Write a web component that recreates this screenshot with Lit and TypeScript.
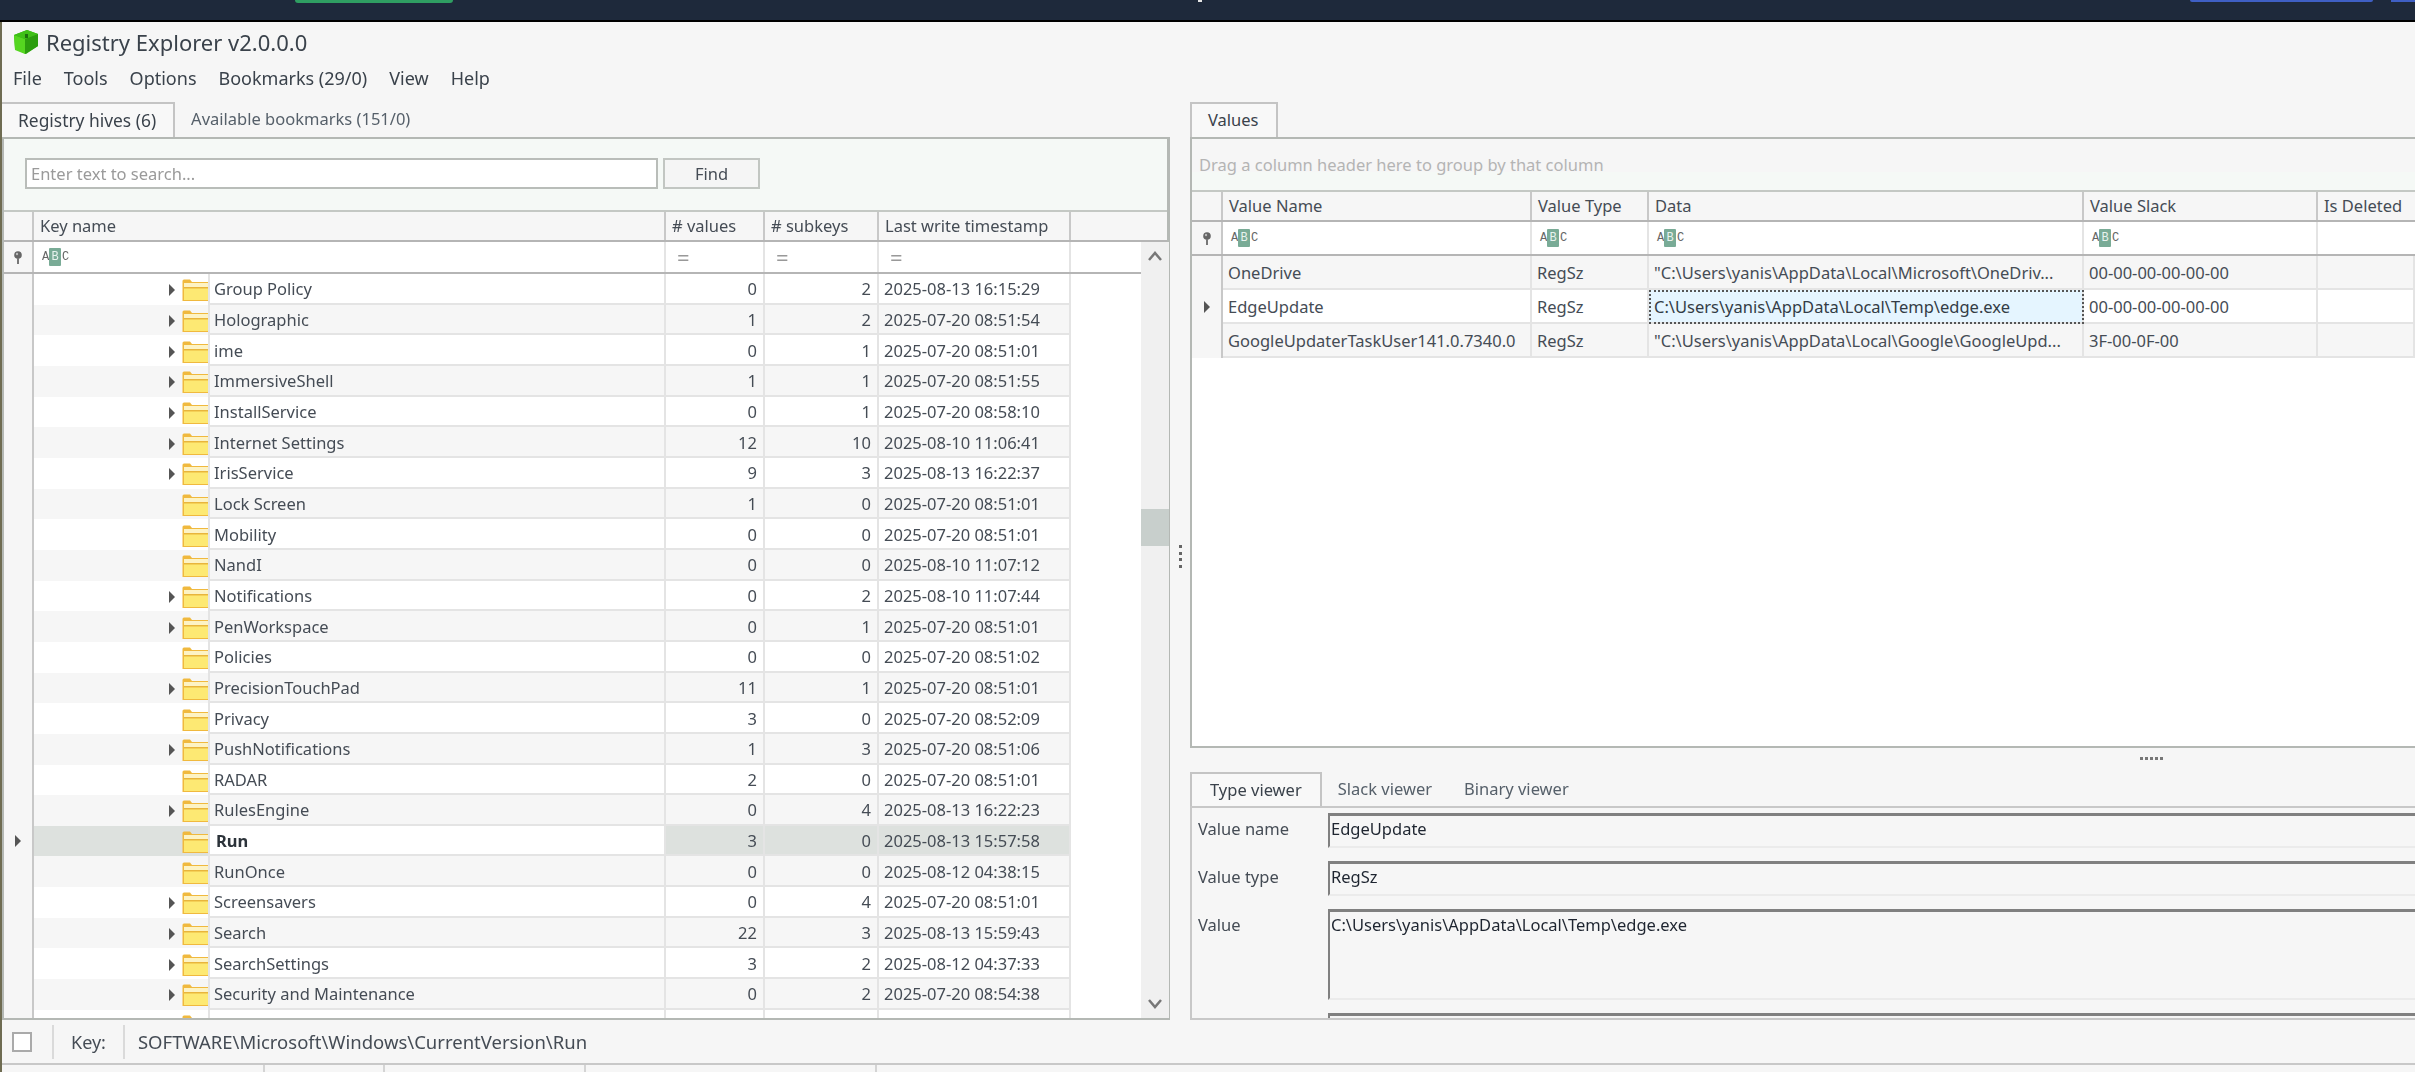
import { LitElement, html, css, svg } from 'lit';
import { customElement } from 'lit/decorators.js';

type Key = [string, number, number, string, boolean];

const keys: Key[] = [
  ['Group Policy', 0, 2, '2025-08-13 16:15:29', true],
  ['Holographic', 1, 2, '2025-07-20 08:51:54', true],
  ['ime', 0, 1, '2025-07-20 08:51:01', true],
  ['ImmersiveShell', 1, 1, '2025-07-20 08:51:55', true],
  ['InstallService', 0, 1, '2025-07-20 08:58:10', true],
  ['Internet Settings', 12, 10, '2025-08-10 11:06:41', true],
  ['IrisService', 9, 3, '2025-08-13 16:22:37', true],
  ['Lock Screen', 1, 0, '2025-07-20 08:51:01', false],
  ['Mobility', 0, 0, '2025-07-20 08:51:01', false],
  ['NandI', 0, 0, '2025-08-10 11:07:12', false],
  ['Notifications', 0, 2, '2025-08-10 11:07:44', true],
  ['PenWorkspace', 0, 1, '2025-07-20 08:51:01', true],
  ['Policies', 0, 0, '2025-07-20 08:51:02', false],
  ['PrecisionTouchPad', 11, 1, '2025-07-20 08:51:01', true],
  ['Privacy', 3, 0, '2025-07-20 08:52:09', false],
  ['PushNotifications', 1, 3, '2025-07-20 08:51:06', true],
  ['RADAR', 2, 0, '2025-07-20 08:51:01', false],
  ['RulesEngine', 0, 4, '2025-08-13 16:22:23', true],
  ['Run', 3, 0, '2025-08-13 15:57:58', false],
  ['RunOnce', 0, 0, '2025-08-12 04:38:15', false],
  ['Screensavers', 0, 4, '2025-07-20 08:51:01', true],
  ['Search', 22, 3, '2025-08-13 15:59:43', true],
  ['SearchSettings', 3, 2, '2025-08-12 04:37:33', true],
  ['Security and Maintenance', 0, 2, '2025-07-20 08:54:38', true],
];

const values = [
  ['OneDrive', 'RegSz', '"C:\\Users\\yanis\\AppData\\Local\\Microsoft\\OneDriv...', '00-00-00-00-00-00'],
  ['EdgeUpdate', 'RegSz', 'C:\\Users\\yanis\\AppData\\Local\\Temp\\edge.exe', '00-00-00-00-00-00'],
  ['GoogleUpdaterTaskUser141.0.7340.0', 'RegSz', '"C:\\Users\\yanis\\AppData\\Local\\Google\\GoogleUpd...', '3F-00-0F-00'],
];

const folder = svg`<svg class="folder" viewBox="0 0 26 22" width="26" height="22">
  <path d="M.5 22V2Q.5 .5 2 .5h6l2 2.500h16v19z" fill="#f0b93e"/>
  <path d="M2 4h24v4H2z" fill="#fdf3c4"/>
  <path d="M2 8h24v1.500H2z" fill="#e8b53c"/>
  <path d="M2 9.500h24v11.500H2z" fill="#fde973"/>
</svg>`;

const arrow = html`<svg class="arrow" viewBox="0 0 8 14" width="8" height="14"><path d="M1 1l6 6-6 6z" fill="#555"/></svg>`;

const pin = html`<svg viewBox="0 0 10 13" width="10" height="13"><circle cx="5" cy="4" r="3.800" fill="#666"/><circle cx="4" cy="3" r="1.200" fill="#bbb"/><path d="M4 7h2v6H4z" fill="#777"/></svg>`;

const abc = html`<span class="abc"><i>A</i><b>B</b><i>C</i></span>`;

@customElement('app-root')
export class AppRoot extends LitElement {
  static styles = css`
    :host {
      display: flex;
      flex-direction: column;
      width: 2415px;
      height: 1072px;
      overflow: hidden;
      font-family: "Noto Sans", "DejaVu Sans", sans-serif;
      font-size: 16.5px;
      color: #454c55;
      background: #f6f6f6;
    }
    .desk {
      flex: 0 0 20px;
      display: flex;
      align-items: flex-start;
      background: #1e293b;
      border-bottom: 2px solid #000;
    }
    .desk .green { margin-left: 295px; width: 158px; height: 3px; background: #2f9e62; border-radius: 0 0 3px 3px; }
    .desk .tick { margin-left: 745px; width: 4px; height: 2px; background: #e6e6e6; }
    .desk .blue { margin-left: 988px; width: 183px; height: 2px; background: #3f5fc4; border-radius: 0 0 3px 3px; }
    .desk .blue2 { margin-left: 18px; flex: 1; height: 2px; background: #3f5fc4; }
    .window {
      flex: 1;
      min-height: 0;
      display: flex;
      flex-direction: column;
      border-left: 2px solid #6f6c52;
      filter: blur(0.4px);
    }
    .title {
      flex: 0 0 40px;
      display: flex;
      align-items: center;
      gap: 7px;
      padding-left: 11px;
      font-size: 22px;
      color: #3a424b;
    }
    .menu {
      flex: 0 0 32px;
      display: flex;
      align-items: center;
      padding-left: 11px;
      font-size: 18px;
      color: #3a424b;
    }
    .menu span { margin-right: 22px; }
    .panes {
      flex: 0 0 918px;
      margin-top: 8px;
      display: grid;
      grid-template-columns: 1168px 20px 1fr;
      grid-template-rows: 918px;
    }
    .pane { display: flex; flex-direction: column; min-width: 0; min-height: 0; }
    .tabs { flex: 0 0 35px; display: flex; }
    .tab {
      display: flex;
      align-items: center;
      padding: 0 15px 2px 16px;
      box-sizing: border-box;
      color: #56606a;
    }
    .tab.on {
      background: #f8f8f8;
      color: #3a424b;
      border: solid #c4c4c4;
      border-width: 2px 2px 0 0;
      padding: 0 17px 2px 16px;
      font-size: 17.4px;
    }
    .tabs.right .tab.on { border-width: 2px 2px 0 2px; font-size: 16.5px; }
    .panel {
      flex: 1;
      box-sizing: border-box;
      min-height: 0;
      display: flex;
      flex-direction: column;
      border: 2px solid #b4b8b4;
      border-width: 2px 3px 2px 2px;
    }
    .search {
      flex: 0 0 71px;
      box-sizing: border-box;
      display: flex;
      align-items: center;
      gap: 5px;
      padding: 0 0 2px 21px;
      background: #f5f9f6;
    }
    .input {
      width: 633px;
      height: 31px;
      box-sizing: border-box;
      display: flex;
      align-items: center;
      padding-left: 4px;
      background: #fff;
      border: 2px solid #b9bdb9;
      color: #9a9a9a;
    }
    .button {
      width: 97px;
      height: 31px;
      box-sizing: border-box;
      display: flex;
      align-items: center;
      justify-content: center;
      background: #f5f5f5;
      border: 2px solid #c2c6c2;
    }
    .cols-left { display: grid; grid-template-columns: 30px 632px 99px 114px 192px 1fr; }
    .cols-right { display: grid; grid-template-columns: 31px 309px 117px 435px 234px 1fr; }
    .head {
      flex: 0 0 32px;
      background: #f6f6f6;
      border-top: 2px solid #c4c8c4;
      border-bottom: 2px solid #b5b5b5;
      box-sizing: border-box;
    }
    .head > div {
      display: flex;
      align-items: center;
      padding: 0 0 2px 6px;
      border-right: 2px solid #c8c8c8;
      box-sizing: border-box;
      white-space: nowrap;
    }
    .head > div:last-child { border-right: none; }
    .filter {
      background: #fff;
      border-bottom: 2px solid #b5b5b5;
      box-sizing: border-box;
    }
    .filter > div {
      display: flex;
      align-items: center;
      border-right: 2px solid #e4e4e4;
      box-sizing: border-box;
      padding-left: 8px;
      color: #8a8a8a;
    }
    .filter > div:first-child {
      background: #f6f6f6;
      justify-content: center;
      padding: 0;
      border-right: 2px solid #c8c8c8;
    }
    .filter > div:last-child { border-right: none; }
    .left-filter { flex: 0 0 32px; }
    .right-filter { flex: 0 0 34px; }
    .eq { padding-left: 11px !important; font-size: 22px; line-height: 1; color: #999 !important; }
    .abc { display: inline-flex; align-items: center; font-size: 12px; font-family: "Liberation Mono", monospace; color: #666; }
    .abc i { font-style: normal; width: 6px; text-align: center; }
    .abc b {
      font-weight: 400;
      color: #e8f2ee;
      background: #79ab96;
      width: 12px;
      height: 18px;
      line-height: 18px;
      text-align: center;
      border-radius: 1px;
      margin: 0 1px;
    }
    .lower { flex: 1; min-height: 0; display: flex; }
    .rows { flex: 0 0 1067px; min-width: 0; overflow: hidden; }
    .row { height: 30.67px; background: #fff; }
    .row.odd { background: #f6f6f6; }
    .row.sel { background: #dde1de; }
    .row .cell { padding-top: 1px; }
    .indicator {
      display: flex;
      align-items: center;
      justify-content: center;
      background: #f6f6f6;
      border-right: 2px solid #c8c8c8;
      box-sizing: border-box;
    }
    .tree { display: flex; align-items: center; justify-content: flex-end; padding-top: 2px; }
    .tree .arrow { margin-right: 6px; }
    .folder { flex: none; }
    .cell {
      display: flex;
      align-items: center;
      min-width: 0;
      padding: 0 5px;
      box-sizing: border-box;
      border-right: 2px solid #e4e4e4;
      border-bottom: 2px solid #e4e4e4;
      white-space: nowrap;
      overflow: hidden;
    }
    .name {
      border-left: 2px solid #e4e4e4;
      background: #fff;
      padding-left: 4px;
    }
    .row.odd .name { background: #f6f6f6; }
    .row.sel .name { background: #fff; font-weight: 700; color: #2c333a; padding-left: 6px; }
    .num { justify-content: flex-end; padding-right: 6px; }
    .keycol { display: grid; grid-template-columns: 174px 1fr; }
    .blank { background: #fff; flex: 0 0 70px; }
    .scroll {
      flex: 0 0 28px;
      display: flex;
      flex-direction: column;
      align-items: center;
      background: #f0f0f0;
      margin-top: -32px;
    }
    .scroll .up { flex: 0 0 28px; display: flex; align-items: center; }
    .scroll .space-a { flex: 0 0 239px; width: 100%; }
    .scroll .thumb { flex: 0 0 37px; width: 100%; background: #c8cfcc; }
    .scroll .space-b { flex: 1; width: 100%; }
    .scroll .down { flex: 0 0 28px; display: flex; align-items: center; }
    .splitter {
      display: flex;
      flex-direction: column;
      align-items: center;
      gap: 3.500px;
      padding-top: 443px;
    }
    .splitter i { width: 3px; height: 3px; background: #666; }
    .right-panel { border-right: none; }
    .group {
      flex: 0 0 51px;
      display: flex;
      align-items: center;
      padding: 0 0 1px 7px;
      box-sizing: border-box;
      color: #b4b4b4;
      background: linear-gradient(#f6f6f6 64%, #f5f9f6 64%);
    }
    .values-panel { flex: 0 0 611px; }
    .vrow { height: 34px; background: #fff; }
    .vrow.odd { background: #f6f6f6; }
    .focus {
      background: #e5f5ff;
      outline: 2px dotted #555;
      outline-offset: -2px;
      color: #333c45;
    }
    .white { flex: 1; background: #fff; }
    .hsplit {
      flex: 0 0 24px;
      box-sizing: border-box;
      display: flex;
      justify-content: flex-end;
      align-items: flex-start;
      gap: 2px;
      padding: 9px 252px 0 0;
    }
    .hsplit i { width: 3px; height: 3px; background: #777; }
    .subtabs { flex: 0 0 34px; display: flex; }
    .subtabs .tab.on { border-width: 2px 2px 0 2px; padding: 0 18px 2px; font-size: 16.5px; }
    .subtabs .tab { padding: 0 16px 2px; }
    .viewer {
      flex: 1;
      min-height: 0;
      overflow: hidden;
      display: grid;
      grid-template-columns: 130px 1fr;
      grid-template-rows: 35px 35px 91px 20px;
      row-gap: 13px;
      padding: 5px 0 0 6px;
      border-top: 2px solid #c8c8c8;
      border-left: 2px solid #c8c8c8;
      border-bottom: 2px solid #c8c8c8;
    }
    .viewer label { display: flex; align-items: center; height: 31px; }
    .field {
      padding: 1px 1px;
      border-top: 3px solid #808080;
      border-left: 2px solid #808080;
      border-bottom: 2px solid #ebebeb;
      box-sizing: border-box;
      color: #1e2530;
      line-height: 24px;
    }
    .status {
      flex: 0 0 43px;
      display: flex;
      align-items: center;
    }
    .check {
      width: 20px;
      height: 20px;
      box-sizing: border-box;
      margin-left: 10px;
      background: #fff;
      border: 2px solid #aaa;
    }
    .sep { width: 2px; height: 34px; background: #dadada; }
    .sep.first { margin-left: 20px; }
    .key-label { margin: 0 17px 0 17px; font-size: 18px; }
    .path { margin-left: 13px; font-size: 18.5px; }
    .bottom {
      flex: 1;
      display: grid;
      grid-template-columns: 263px 120px 201px 291px 1fr;
      border-top: 2px solid #c8c8c8;
    }
    .bottom div { border-right: 2px solid #d4d4d4; }
    .bottom div:last-child { border-right: none; }
  `;

  private renderKey(k: Key, i: number) {
    const sel = k[0] === 'Run';
    return html`<div class="row cols-left ${i % 2 ? 'odd' : ''} ${sel ? 'sel' : ''}">
      <div class="indicator">${sel ? arrow : ''}</div>
      <div class="keycol">
        <div class="tree">${k[4] ? arrow : ''}${folder}</div>
        <div class="cell name">${k[0]}</div>
      </div>
      <div class="cell num">${k[1]}</div>
      <div class="cell num">${k[2]}</div>
      <div class="cell">${k[3]}</div>
    </div>`;
  }

  render() {
    return html`
      <div class="desk">
        <div class="green"></div><div class="tick"></div><div class="blue"></div><div class="blue2"></div>
      </div>
      <div class="window">
        <div class="title">
          <svg viewBox="0 0 26 26" width="26" height="26">
            <path d="M1 6l13-5 11 4v12l-12 8-11-5z" fill="#33b010"/>
            <path d="M1 6l11 4v15l-10-4z" fill="#55d620"/>
            <path d="M12 10l13-5v12l-13 8z" fill="#2c9e0e"/>
            <path d="M1 6l13-5 11 4-13 5z" fill="#3fc017"/>
            <path d="M12 5h3v4h-3z" fill="#1c6f0c"/>
          </svg>
          <span>Registry Explorer v2.0.0.0</span>
        </div>
        <div class="menu">
          <span>File</span><span>Tools</span><span>Options</span><span>Bookmarks (29/0)</span><span>View</span><span>Help</span>
        </div>
        <div class="panes">
          <div class="pane">
            <div class="tabs">
              <div class="tab on">Registry hives (6)</div>
              <div class="tab">Available bookmarks (151/0)</div>
            </div>
            <div class="panel">
              <div class="search">
                <div class="input">Enter text to search...</div>
                <div class="button">Find</div>
              </div>
              <div class="head cols-left">
                <div></div><div>Key name</div><div># values</div><div># subkeys</div><div>Last write timestamp</div><div></div>
              </div>
              <div class="filter left-filter cols-left">
                <div>${pin}</div><div>${abc}</div><div class="eq">=</div><div class="eq">=</div><div class="eq">=</div><div></div>
              </div>
              <div class="lower">
                <div class="rows">
                  ${keys.map((k, i) => this.renderKey(k, i))}
                  <div class="row cols-left"><div class="indicator"></div><div class="keycol"><div class="tree">${folder}</div><div class="cell name"></div></div><div class="cell"></div><div class="cell"></div><div class="cell"></div></div>
                </div>
                <div class="blank"></div>
                <div class="scroll">
                  <div class="up"><svg viewBox="0 0 14 10" width="14" height="10"><path d="M1 9l6-7 6 7" fill="none" stroke="#777" stroke-width="2.500"/></svg></div>
                  <div class="space-a"></div>
                  <div class="thumb"></div>
                  <div class="space-b"></div>
                  <div class="down"><svg viewBox="0 0 14 10" width="14" height="10"><path d="M1 1l6 7 6-7" fill="none" stroke="#777" stroke-width="2.500"/></svg></div>
                </div>
              </div>
            </div>
          </div>
          <div class="splitter"><i></i><i></i><i></i><i></i></div>
          <div class="pane">
            <div class="tabs right"><div class="tab on">Values</div></div>
            <div class="panel values-panel right-panel">
              <div class="group">Drag a column header here to group by that column</div>
              <div class="head cols-right">
                <div></div><div>Value Name</div><div>Value Type</div><div>Data</div><div>Value Slack</div><div>Is Deleted</div>
              </div>
              <div class="filter right-filter cols-right">
                <div>${pin}</div><div>${abc}</div><div>${abc}</div><div>${abc}</div><div>${abc}</div><div></div>
              </div>
              ${values.map((v, i) => html`<div class="vrow cols-right ${i === 1 ? '' : 'odd'}">
                <div class="indicator">${i === 1 ? arrow : ''}</div>
                <div class="cell">${v[0]}</div>
                <div class="cell">${v[1]}</div>
                <div class="cell ${i === 1 ? 'focus' : ''}">${v[2]}</div>
                <div class="cell">${v[3]}</div>
                <div class="cell"></div>
              </div>`)}
              <div class="white"></div>
            </div>
            <div class="hsplit"><i></i><i></i><i></i><i></i><i></i></div>
            <div class="subtabs">
              <div class="tab on">Type viewer</div><div class="tab">Slack viewer</div><div class="tab">Binary viewer</div>
            </div>
            <div class="viewer">
              <label>Value name</label><div class="field">EdgeUpdate</div>
              <label>Value type</label><div class="field">RegSz</div>
              <label>Value</label><div class="field">C:\\Users\\yanis\\AppData\\Local\\Temp\\edge.exe</div>
              <label></label><div class="field"></div>
            </div>
          </div>
        </div>
        <div class="status">
          <div class="check"></div>
          <div class="sep first"></div>
          <span class="key-label">Key:</span>
          <div class="sep"></div>
          <span class="path">SOFTWARE\\Microsoft\\Windows\\CurrentVersion\\Run</span>
        </div>
        <div class="bottom"><div></div><div></div><div></div><div></div><div></div></div>
      </div>
    `;
  }
}
